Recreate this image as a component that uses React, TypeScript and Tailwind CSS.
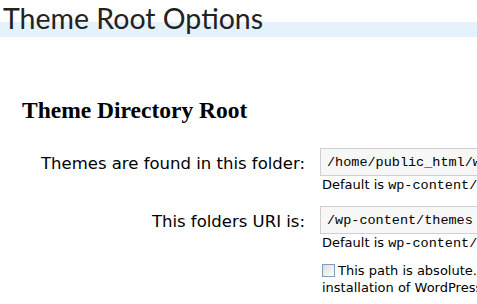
import React from "react";

export default function App() {
  const label = "text-[16.5px] text-black text-right w-[305px] shrink-0";
  const mono = { fontFamily: '"Liberation Mono", monospace' };
  return (
    <div className="w-[477px] h-[304px] overflow-hidden bg-white">
      <div className="relative h-[40px]">
        <div className="absolute left-0 right-0 top-[22px] h-[15px] bg-[#e4f2fc]" />
        <h1
          className="relative pl-[3px] pt-[1px] text-[28.5px] leading-[34px] text-[#222] whitespace-nowrap"
          style={{ fontFamily: 'Lato, sans-serif' }}
        >
          Theme Root Options
        </h1>
      </div>
      <h2
        className="mt-[56px] pl-[22px] text-[23.5px] leading-[28px] font-bold text-black"
        style={{ fontFamily: '"Liberation Serif", serif' }}
      >
        Theme Directory Root
      </h2>
      <div className="mt-[24px] flex flex-col gap-[12px]" style={{ fontFamily: '"DejaVu Sans", sans-serif' }}>
        <div className="flex items-start">
          <div className={label + " pt-[4px]"}>Themes are found in this folder:</div>
          <div className="ml-[15px] flex flex-col">
            <div
              className="h-[28px] w-[200px] border border-[#d0d0d0] bg-[#f7f7f7] pl-[6px] pt-[4px] text-[13.5px] text-black whitespace-nowrap overflow-hidden"
              style={mono}
            >
              /home/public_html/wp-content/themes
            </div>
            <div className="pl-[2px] text-[13px] leading-[17px] text-black whitespace-nowrap mt-[0px]">
              Default is <span className="text-[13.5px]" style={mono}>wp-content/themes</span>
            </div>
          </div>
        </div>
        <div className="flex items-start">
          <div className={label + " pt-[4px]"}>This folders URI is:</div>
          <div className="ml-[15px] flex flex-col">
            <div
              className="h-[28px] w-[200px] border border-[#d0d0d0] bg-[#f7f7f7] pl-[6px] pt-[4px] text-[13.5px] text-black whitespace-nowrap overflow-hidden"
              style={mono}
            >
              /wp-content/themes
            </div>
            <div className="pl-[2px] text-[13px] leading-[17px] text-black whitespace-nowrap mt-[0px]">
              Default is <span className="text-[13.5px]" style={mono}>wp-content/themes</span>
            </div>
            <div className="mt-[10px] pl-[2px] text-[13px] leading-[17px] text-black w-[260px]">
              <span className="inline-block align-[-2px] w-[13px] h-[13px] border border-[#7f9db9] bg-gradient-to-br from-[#dcdcd7] to-white mr-[3px]" />
              This path is absolute. Use for an installation of WordPress
            </div>
          </div>
        </div>
      </div>
    </div>
  );
}
